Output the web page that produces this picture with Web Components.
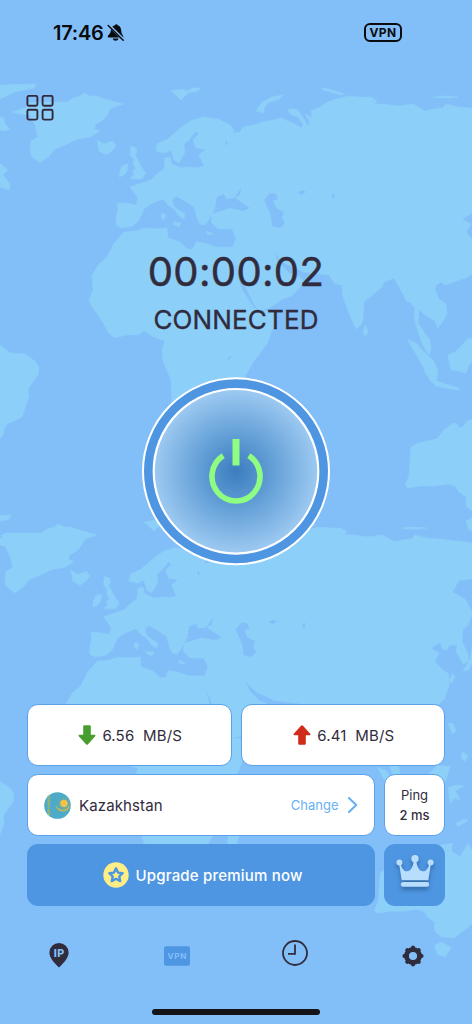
<!DOCTYPE html>
<html lang="en">
<head>
<meta charset="utf-8">
<meta name="viewport" content="width=device-width, initial-scale=1">
<title>VPN</title>
<style>
    html, body {
        margin: 0;
        height: 100%;
    }

    body {
        font-family: Inter, "Liberation Sans", sans-serif;
        color: #312c3d;
        background: #82bff9;
        --sea: #82bff9;
        --land: #8ccff9;
        --accent: #4e96e1;
        --ink: #312c3d;
    }
</style>
</head>
<body>
<vpn-app>
    <world-map slot="map"></world-map>
    <status-bar slot="top" time="17:46"></status-bar>
    <menu-button slot="top"></menu-button>
    <connection-status time="00:00:02">CONNECTED</connection-status>
    <power-button></power-button>
    <card-row slot="cards" columns="1fr 1fr">
        <speed-card direction="down" color="#479e2e">6.56&nbsp; MB/S</speed-card>
        <speed-card direction="up" color="#d02c1c">6.41&nbsp; MB/S</speed-card>
    </card-row>
    <card-row slot="cards" columns="1fr 61px">
        <country-card action="Change">Kazakhstan</country-card>
        <ping-card label="Ping">2 ms</ping-card>
    </card-row>
    <card-row slot="cards" columns="1fr 61px">
        <premium-button>Upgrade premium now</premium-button>
        <crown-button></crown-button>
    </card-row>
    <tab-bar slot="bottom"></tab-bar>
    <home-indicator slot="bottom"></home-indicator>
</vpn-app>

<script>
// small helper: defines an element whose shadow root is built from a string
const define = (name, html) => {
    customElements.define(name, class extends HTMLElement {
        constructor() {
            super();
            this.attachShadow({ mode: 'open' });
            this.shadowRoot.innerHTML = typeof html === 'function' ? html(this) : html;
        }
    });
};

define('vpn-app', `
    <style>
        :host {
            display: grid;
            grid-template: 1024px / 472px;
            width: 472px;
            height: 1024px;
            overflow: hidden;
        }

        ::slotted([slot="map"]), #screen {
            grid-area: 1 / 1;
        }

        #screen {
            z-index: 1;
            display: flex;
            flex-direction: column;
        }

        main {
            display: flex;
            flex-direction: column;
            align-items: center;
            padding-top: 127px;
            flex: 1;
        }

        #cards {
            display: flex;
            flex-direction: column;
            gap: 8px;
            padding: 0 27px;
        }
    </style>
    <slot name="map"></slot>
    <div id="screen">
        <slot name="top"></slot>
        <main><slot></slot></main>
        <section id="cards"><slot name="cards"></slot></section>
        <slot name="bottom"></slot>
    </div>
`);

define('world-map', `
    <style>
        :host { display: block; background: var(--sea); }
        svg { display: block; }
        .land { fill: var(--land); stroke: var(--land); stroke-width: .6; stroke-linejoin: round; }
        .water { fill: var(--sea); }
    </style>
    <svg width="472" height="1024" viewBox="0 0 472 1024">
        <defs>
            <g id="world">
                <g class="land">
                    <!-- americas, greenland, iceland -->
                    <path d="M-30 86 0 85 36 84 34 88 15 92 0 99-20 98Z"/>
                    <path d="M0 117 4 118 5 124 10 129 6 131 0 130ZM0 163 8 170 3 175 10 184 9 190 0 187Z"/>
                    <path d="M12 112 28 107 26 105 31 102 50 102 67 102 73 98 80 96 84 93 90 96 96 96 105 99 112 101 123 104 111 108 107 115 103 120 96 124 94 129 100 131 90 137 78 139 65 145 55 149 49 156 40 163 31 156 30 147 31 141 38 137 35 125 30 115 20 114Z"/>
                    <path d="M97 140 104 144 113 141 116 146 112 151 106 155 99 151Z"/>
                    <path d="M0 345 4 348 10 353 25 354 35 361 39 367 38 375 28 389 29 396 22 417 16 420 7 424 4 429 3 435 0 438-30 440-30 345Z"/>
                    <!-- arctic islands -->
                    <path d="M171 91 182 89 188 91 192 88 201 88 198 91 188 93 181 100 177 96ZM256 111 262 102 272 97 283 95 279 99 268 103 264 108 264 113ZM321 88 329 89 338 92 345 94 341 95 323 90ZM433 97 446 96 458 97 450 98 438 98Z"/>
                    <!-- british isles -->
                    <path d="M131 146 136 148 137 152 135 155 139 162 142 168 146 173 142 179 130 179 134 175 133 171 136 169 133 163 134 159 130 155ZM122 166 128 164 127 171 124 175 119 177 120 171Z"/>
                    <!-- europe, asia and africa -->
                    <path d="M156 151 157 144 168 139 178 130 190 121 203 117 218 119 230 125 234 130 232 133 240 132 243 127 254 125 262 122 274 120 281 118 290 122 302 128 303 124 298 117 290 114 288 109 296 109 300 113 305 121 308 126 310 122 305 114 312 117 311 111 320 107 326 103 336 99 349 96 360 97 371 97 377 101 374 104 384 104 398 106 413 104 425 111 434 109 443 108 446 104 458 107 470 108 504 112 510 148 491 150 484 162 498 170 505 184 499 197 495 199 494 212 500 225 501 232 495 235 488 222 489 216 481 216 478 221 474 219 472 213 462 219 471 224 466 232 472 239 480 245 481 256 476 271 468 277 451 283 445 285 441 282 436 285 435 290 439 299 446 304 447 314 443 321 438 328 434 320 426 316 419 309 418 323 424 332 430 340 431 350 429 355 423 346 418 331 414 318 415 308 410 302 407 302 402 292 394 278 384 282 382 287 364 302 363 320 361 325 356 329 349 313 343 297 342 285 335 284 329 275 320 274 304 272 295 268 286 264 280 259 274 252 278 262 289 273 300 277 304 282 293 295 281 300 269 308 258 311 254 304 247 290 240 275 233 258 237 274 242 290 254 308 263 311 277 310 274 325 267 344 254 361 245 376 243 405 230 430 210 458 188 458 176 430 169 411 172 400 171 380 163 361 162 350 165 341 152 336 144 331 138 335 126 335 115 338 109 333 99 316 92 307 89 300 93 290 92 276 98 265 107 257 114 243 124 232 136 231 145 228 158 229 167 228 168 238 180 242 187 249 193 249 196 242 204 243 216 247 233 247 236 238 232 229 218 229 211 222 212 214 225 210 215 208 211 216 205 225 200 224 197 218 194 207 185 201 176 196 172 200 174 206 180 211 185 214 184 219 179 216 174 209 168 205 163 199 158 201 151 204 144 209 139 220 133 226 122 228 116 225 116 218 118 210 117 203 126 203 136 205 138 198 130 187 139 184 151 180 158 173 164 169 165 158 170 157 172 164 181 168 191 167 197 168 204 166 199 155 205 150 215 144 209 150 196 148 193 140 199 134 196 131 189 140 184 144 185 152 179 163 174 160 171 150 165 153Z"/>
                    <path d="M173 222 181 223 179 227 173 224ZM162 213 166 215 164 220 161 218ZM206 231 213 234 208 235ZM365 325 368 331 366 336 363 334Z"/>
                    <!-- islands of south-east asia -->
                    <path d="M408 340 416 343 424 352 433 360 438 370 437 379 434 380 425 370 417 356ZM448 355 455 352 462 345 469 338 482 339 476 356 469 365 466 373 458 371 451 370ZM424 370 430 374 437 381 448 385 459 388 458 390 445 388 436 386 430 380ZM480 295 485 296 488 303 484 306ZM494 324 500 328 497 334 493 330ZM480 360 488 358 496 359 487 364 492 373 486 371 482 377ZM487 397 498 392 500 394 490 400Z"/>
                    <path d="M484 245 487 248 483 255 481 252ZM506 208 510 220 501 241 495 242 502 231Z"/>
                    <!-- australia, madagascar -->
                    <path d="M411 447 418 443 432 440 437 439 444 430 453 423 457 424 459 428 463 427 467 421 472 419 484 417 483 425 492 431 500 417 510 435 512 480 503 500 486 513 473 512 466 506 466 497 459 492 455 486 448 484 434 486 420 486 408 488 405 485 409 476ZM466 521 473 517 483 523 477 532 469 530Z"/>
                    <path d="M269 389 271 402 262 424 255 423 257 405Z"/>
                </g>
                <g class="water">
                    <path d="M215 207 217 197 224 194 226 199 234 198 239 191 241 188 240 195 235 198 250 208 243 211 230 208 221 211Z"/>
                    <path d="M264 200 270 193 276 194 278 199 273 201 276 208 284 212 282 218 285 223 280 228 272 226 271 216Z"/>
                    <path d="M298 192 303 190 306 192 301 195ZM331 196 335 193 334 199ZM233 356 228 360 228 357Z"/>
                    <path d="M225 140 228 143 226 146Z"/>
                </g>
            </g>
        </defs>
        <use href="#world"/>
        <use href="#world" transform="translate(-24.5 432.5) scale(.985)"/>
    </svg>
`);

define('status-bar', el => `
    <style>
        :host {
            display: flex;
            align-items: center;
            height: 65px;
            padding: 0 70px 0 53px;
            color: #090b0f;
        }

        time {
            font-size: 20px;
            font-weight: 600;
            letter-spacing: -.25px;
        }

        svg { margin-left: 3px; }

        #badge {
            margin-left: auto;
            box-sizing: border-box;
            width: 38px;
            height: 19px;
            border: 2px solid;
            border-radius: 6px;
            font-size: 12px;
            font-weight: 700;
            line-height: 15px;
            text-align: center;
            letter-spacing: .3px;
        }
    </style>
    <time>${el.getAttribute('time')}</time>
    <svg width="18" height="18" viewBox="0 0 18 18">
        <path d="M8 .9C8.7 0 10.3.1 10.8 1.2 13.6 2.2 14.3 5 14.3 7.5 14.3 10.4 16.5 11.4 16.5 13.5H1.5C.3 13.5.5 11.7 1.8 10.7 3.5 9.1 3.7 8 3.8 6.2 4.1 3.6 5.3 1.9 8 1.2ZM5.8 14.6H11.4C11.1 17.6 6.1 17.6 5.8 14.6Z" fill="currentColor"/>
        <path d="M1.9 1.3 16.9 16.1" stroke="#82bff9" stroke-width="2.9"/>
        <path d="M1.2 1.5 16.2 16.3" stroke="currentColor" stroke-width="1.5" stroke-linecap="round"/>
    </svg>
    <span id="badge">VPN</span>
`);

define('menu-button', `
    <style>
        :host { display: block; padding: 30px 0 0 26px; height: 28px; }
        svg { display: block; }
        rect { fill: none; stroke: var(--ink); stroke-width: 1.9; }
    </style>
    <svg width="28" height="26" viewBox="0 0 28 26">
        <rect x="1.4" y=".9" width="10" height="9.8" rx="1.5"/>
        <rect x="16.6" y=".9" width="10" height="9.8" rx="1.5"/>
        <rect x="1.4" y="14.8" width="10" height="9.8" rx="1.5"/>
        <rect x="16.6" y="14.8" width="10" height="9.8" rx="1.5"/>
    </svg>
`);

define('connection-status', el => `
    <style>
        :host { display: block; text-align: center; }

        /* the thin stroke gives a weight between regular and medium */
        #time {
            font-size: 40px;
            font-weight: 400;
            line-height: 44px;
            letter-spacing: .35px;
            white-space: nowrap;
            -webkit-text-stroke: .5px currentColor;
        }

        #state {
            margin-top: 10px;
            font-size: 26px;
            font-weight: 400;
            line-height: 31px;
            letter-spacing: .15px;
            -webkit-text-stroke: .35px currentColor;
        }
    </style>
    <div id="time">${el.getAttribute('time')}</div>
    <div id="state"><slot></slot></div>
`);

define('power-button', `
    <style>
        :host { display: block; margin-top: 41px; }
        svg { display: block; }
    </style>
    <svg width="190" height="190" viewBox="0 0 190 190">
        <defs>
            <radialGradient id="glow">
                <stop offset="0" stop-color="#3b7dbf"/>
                <stop offset=".5" stop-color="#68a3d9"/>
                <stop offset="1" stop-color="#9dcaf2"/>
            </radialGradient>
        </defs>
        <circle cx="95" cy="95.3" r="93" fill="var(--accent)" stroke="#fff" stroke-width="2"/>
        <circle cx="95" cy="95.3" r="82.3" fill="url(#glow)" stroke="#fff" stroke-width="2.2"/>
        <g fill="none" stroke="#8efd82">
            <path d="M95 63V89.5" stroke-width="7"/>
            <path d="M82.2 79.6A24 24.6 0 1 0 107.8 79.6" stroke-width="5.6"/>
        </g>
    </svg>
`);

define('card-row', el => `
    <style>
        :host {
            display: grid;
            grid-template-columns: ${el.getAttribute('columns')};
            gap: 9px;
            height: 62px;
        }
    </style>
    <slot></slot>
`);

// shared look of the white cards
const card = `
    box-sizing: border-box;
    background: #fff;
    border: 1.4px solid #5ba1ea;
    border-radius: 11px;
`;

define('speed-card', el => `
    <style>
        :host {
            ${card}
            display: flex;
            align-items: center;
            justify-content: center;
            gap: 6px;
            padding-left: 2px;
            font-size: 15px;
            letter-spacing: .15px;
        }

        :host([direction="up"]) svg { transform: rotate(180deg); }
    </style>
    <svg width="18" height="20" viewBox="0 0 18 20">
        <path d="M6.3.2H11.7Q12.8.2 12.8 1.4V9.8H16.4Q18.2 10 17 11.6L10 19.2Q9 20.2 8 19.2L1 11.6Q-.2 10 1.6 9.8H5.2V1.4Q5.2.2 6.3.2Z" fill="${el.getAttribute('color')}"/>
    </svg>
    <span><slot></slot></span>
`);

define('country-card', el => `
    <style>
        :host {
            ${card}
            display: flex;
            align-items: center;
            padding: 0 16px;
            font-size: 15px;
        }

        #name { margin-left: 8px; letter-spacing: .12px; }
        #action { margin-left: auto; margin-right: 9.5px; color: #67b0f4; font-size: 13px; }
    </style>
    <svg width="27" height="27" viewBox="0 0 27 27">
        <circle cx="13.5" cy="13.5" r="13.3" fill="#4dabc8"/>
        <path d="M4.8 3.7V23.3" stroke="#9eb56d" stroke-width="2.6" stroke-dasharray="1.6 .6"/>
        <circle cx="20" cy="11.5" r="5" fill="none" stroke="#b5b05b" stroke-width="1" stroke-dasharray=".8 .8"/>
        <circle cx="20" cy="11.5" r="3.7" fill="#f4c244"/>
        <path d="M12.3 14.2C13.6 20 23.5 21.3 25.4 13.5M14.3 16C17 19.2 21 19.2 24 16" fill="none" stroke="#c5b757" stroke-width="1.1"/>
    </svg>
    <span id="name"><slot></slot></span>
    <span id="action">${el.getAttribute('action')}</span>
    <svg width="10" height="16" viewBox="0 0 10 16">
        <path d="M1 1 8.2 8 1 15" fill="none" stroke="#67b0f4" stroke-width="2.1" stroke-linecap="round" stroke-linejoin="round"/>
    </svg>
`);

define('ping-card', el => `
    <style>
        :host {
            ${card}
            display: flex;
            flex-direction: column;
            align-items: center;
            justify-content: center;
            font-size: 13px;
            line-height: 20px;
        }

        b { font-weight: 500; }
    </style>
    <span>${el.getAttribute('label')}</span>
    <b><slot></slot></b>
`);

define('premium-button', `
    <style>
        :host {
            display: flex;
            align-items: center;
            justify-content: center;
            gap: 6px;
            padding-left: 4px;
            border-radius: 11px;
            background: var(--accent);
            color: #fff;
            font-size: 15px;
            font-weight: 500;
            letter-spacing: .2px;
        }
    </style>
    <svg width="26" height="26" viewBox="0 0 26 26">
        <circle cx="13" cy="13" r="12.7" fill="#fdee85"/>
        <path d="M13 6.3 15 10.6 19.7 11.2 16.3 14.4 17.2 19.1 13 16.8 8.8 19.1 9.7 14.4 6.3 11.2 11 10.6Z" fill="none" stroke="var(--accent)" stroke-width="2.4" stroke-linejoin="round"/>
    </svg>
    <span><slot></slot></span>
`);

define('crown-button', `
    <style>
        :host {
            display: flex;
            justify-content: center;
            padding-top: 10px;
            box-sizing: border-box;
            border-radius: 11px;
            background: var(--accent);
        }

        svg { filter: drop-shadow(0 3px 2px rgba(20, 60, 110, .5)); }
    </style>
    <svg width="38" height="34" viewBox="0 0 38 34" fill="#b9defd">
        <circle cx="19" cy="4.7" r="3.7"/>
        <circle cx="3.4" cy="8.6" r="3"/>
        <circle cx="34.6" cy="8.6" r="3"/>
        <path d="M3 9 4.6 9.4C6 15.2 8.2 17.3 11 17.3 14.8 17.3 17.2 12.2 17.6 7.5H20.4C20.8 12.2 23.2 17.3 27 17.3 29.8 17.3 32 15.2 33.4 9.4L35 9 32.3 26.3H5.7Z"/>
        <rect x="4.8" y="28" width="28.4" height="4.8" rx="2.4"/>
    </svg>
`);

define('tab-bar', `
    <style>
        :host {
            display: grid;
            grid-template-columns: repeat(4, 1fr);
            justify-items: center;
            align-items: start;
            height: 103px;
            padding-top: 34px;
            box-sizing: border-box;
        }

        svg { display: block; }
        text { font-family: Inter, "Liberation Sans", sans-serif; font-weight: 800; text-anchor: middle; }
        #ip { margin-top: 3px; }
        #vpn { margin-top: 6px; }
        #gear { margin-top: 5px; }
    </style>
    <svg id="ip" width="20" height="25" viewBox="0 0 20 25">
        <path d="M10 0A9.6 9.6 0 0 1 19.6 9.7C19.6 15 14 20.5 10 24.6 6 20.5.4 15 .4 9.7A9.6 9.6 0 0 1 10 0Z" fill="var(--ink)"/>
        <text x="10.3" y="13.8" font-size="10.6" letter-spacing=".5" fill="#82bff9">IP</text>
    </svg>
    <svg id="vpn" width="26" height="20" viewBox="0 0 26 20">
        <rect y=".2" width="26" height="19.5" rx="2" fill="var(--accent)"/>
        <text x="13.3" y="13" font-size="8.2" letter-spacing=".6" fill="#82bff9" style="font-weight: 700">VPN</text>
    </svg>
    <svg width="26" height="26" viewBox="0 0 26 26">
        <path d="M13 1A12 12 0 1 1 13 25 12 12 0 1 1 13 1ZM13 4.5V13.8H6" fill="none" stroke="var(--ink)" stroke-width="1.8"/>
    </svg>
    <svg id="gear" width="22" height="22" viewBox="0 0 22 22">
        <g stroke="var(--ink)" stroke-width="4" stroke-linecap="round">
            <path d="M11 2.4V5M11 17V19.6M2.4 11H5M17 11H19.6M5.2 5.2 6.5 6.5M15.5 15.5 16.8 16.8M16.8 5.2 15.5 6.5M6.5 15.5 5.2 16.8"/>
        </g>
        <circle cx="11" cy="11" r="6.5" fill="none" stroke="var(--ink)" stroke-width="4.8"/>
    </svg>
`);

define('home-indicator', `
    <style>
        :host {
            display: block;
            width: 168px;
            height: 5.6px;
            margin: 0 auto 9.4px;
            border-radius: 3px;
            background: #141518;
        }
    </style>
`);
</script>
</body>
</html>
